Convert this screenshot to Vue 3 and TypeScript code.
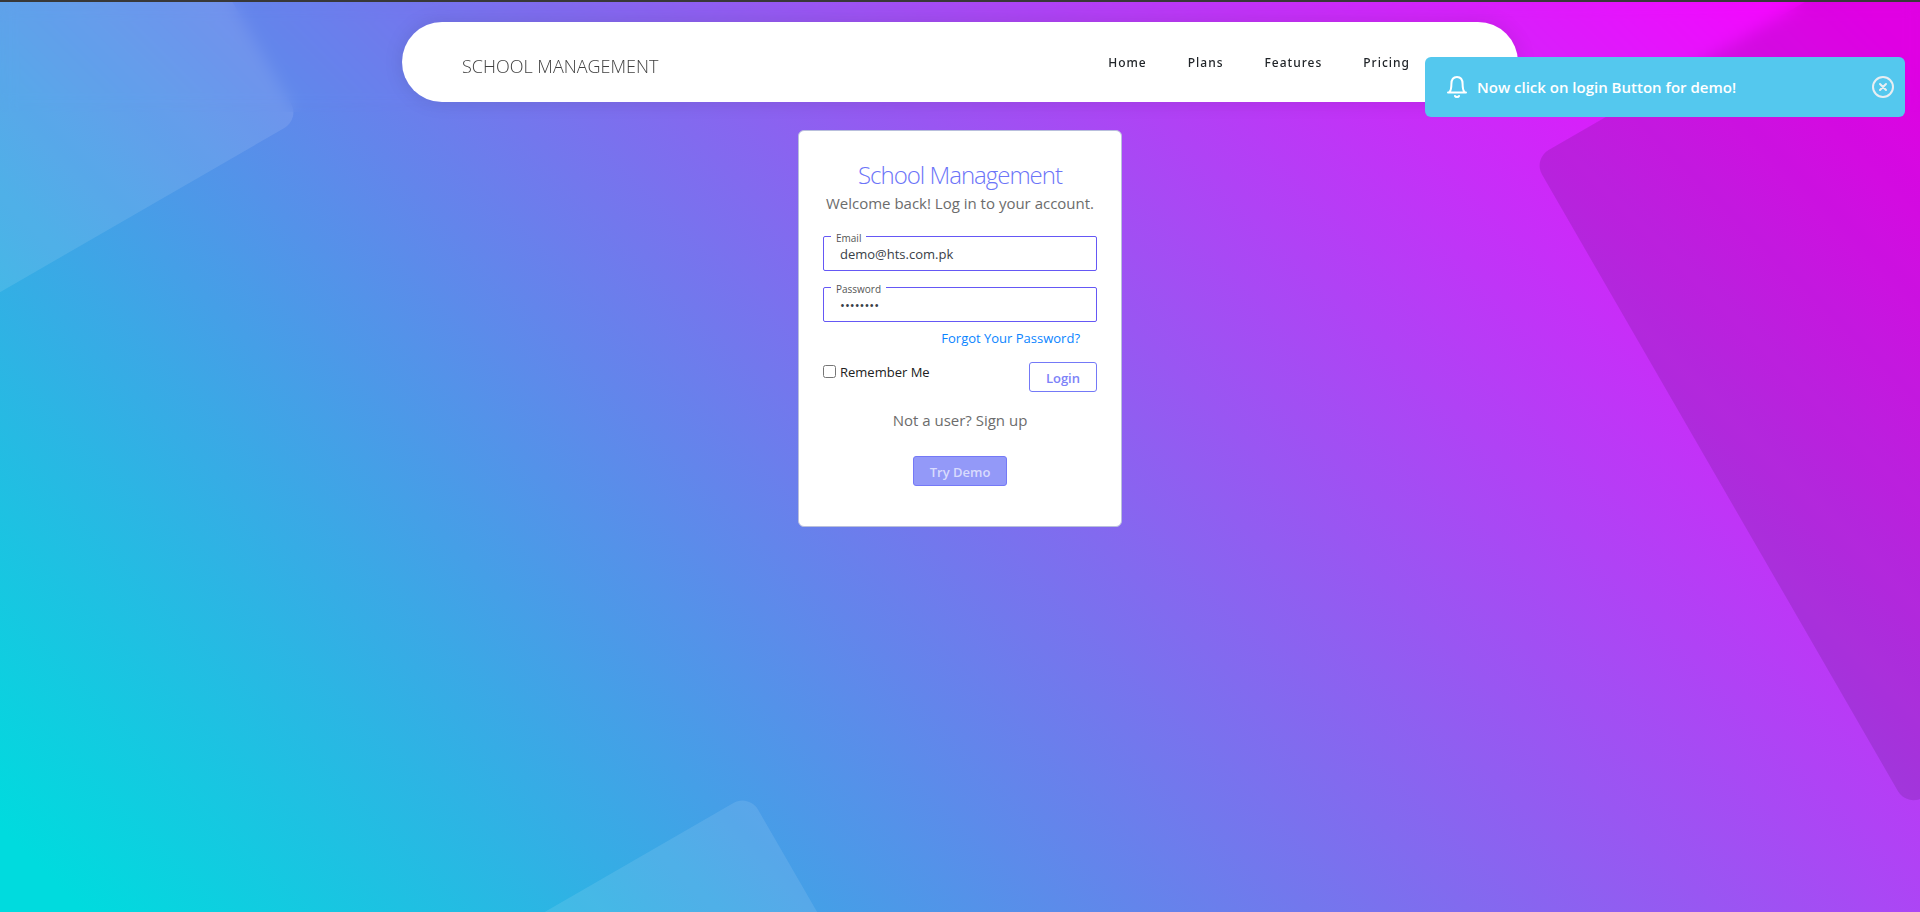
<script setup lang="ts">
import { ref } from 'vue'

interface NavLink {
  label: string
  href: string
}

const links: NavLink[] = [
  { label: 'Home', href: '#home' },
  { label: 'Plans', href: '#plans' },
  { label: 'Features', href: '#features' },
  { label: 'Pricing', href: '#pricing' },
]

const email = ref('demo@hts.com.pk')
const password = ref('demo1234')
const remember = ref(false)
const toastOpen = ref(true)
</script>

<template>
  <div class="page">
    <svg class="shapes" viewBox="0 0 1920 912" preserveAspectRatio="xMidYMid slice" aria-hidden="true">
      <rect class="light" x="-700" y="-500" width="700" height="500" rx="18" transform="translate(300 119) rotate(-30)" />
      <rect class="dark" x="0" y="0" width="748" height="748" rx="18" transform="translate(1533 159) rotate(-30)" />
      <rect class="light" x="-500" y="0" width="500" height="500" rx="18" transform="translate(749 794) rotate(-30)" />
    </svg>

    <header class="header">
      <nav class="pill">
        <a class="brand" href="#home">SCHOOL MANAGEMENT</a>
        <ul class="links">
          <li v-for="link in links" :key="link.label">
            <a :href="link.href">{{ link.label }}</a>
          </li>
        </ul>
      </nav>
    </header>

    <main class="main">
      <form class="card" @submit.prevent>
        <h1>School Management</h1>
        <p class="welcome">Welcome back! Log in to your account.</p>

        <div class="field">
          <label for="email">Email</label>
          <input id="email" v-model="email" type="email" />
        </div>
        <div class="field">
          <label for="password">Password</label>
          <input id="password" v-model="password" type="password" />
        </div>

        <a class="forgot" href="#forgot">Forgot Your Password?</a>

        <div class="row">
          <div class="remember">
            <input id="remember" v-model="remember" type="checkbox" />
            <label for="remember">Remember Me</label>
          </div>
          <button class="btn" type="submit">Login</button>
        </div>

        <a class="signup" href="#signup">Not a user? Sign up</a>
        <button class="btn demo" type="button" disabled>Try Demo</button>
      </form>
    </main>

    <div v-if="toastOpen" class="toast" role="status">
      <svg class="bell" viewBox="0 0 20 22" aria-hidden="true">
        <path d="M1 16.500h18M2.500 16c1.700-2 1.900-4.500 1.900-8C4.400 3.800 6.500 1 10 1s5.600 2.800 5.600 7c0 3.500.2 6 1.900 8" />
        <path d="M8 20c.5 1.200 3.500 1.200 4 0" />
      </svg>
      <span class="message">Now click on login Button for demo!</span>
      <button class="close" type="button" aria-label="Close" @click="toastOpen = false">
        <svg viewBox="0 0 22 22" aria-hidden="true">
          <circle cx="11" cy="11" r="10" />
          <path d="M8 8l6 6M14 8l-6 6" />
        </svg>
      </button>
    </div>
  </div>
</template>

<style>
body {
  margin: 0;
}
</style>

<style scoped>
.page {
  position: relative;
  box-sizing: border-box;
  min-height: 100vh;
  overflow: hidden;
  border-top: 2px solid #383838;
  background: linear-gradient(45deg, #00dbde 3%, #fc00ff 98%);
  font-family: "Open Sans", "Noto Sans", sans-serif;
  font-size: 13px;
  line-height: 20px;
}

.page a {
  text-decoration: none;
}

.shapes {
  position: absolute;
  top: -2px;
  left: 0;
  width: 100%;
  height: 100vh;
}

.light {
  fill: rgba(255, 255, 255, 0.1);
}

.dark {
  fill: rgba(0, 0, 0, 0.11);
}

.header {
  position: relative;
  display: flex;
  justify-content: center;
  padding: 20px 24px 10px;
  backdrop-filter: blur(8px);
}

.pill {
  display: flex;
  align-items: center;
  justify-content: space-between;
  box-sizing: border-box;
  width: 100%;
  max-width: 1116px;
  height: 80px;
  padding: 0 108px 0 60px;
  border-radius: 40px;
  background: #fff;
  box-shadow: 0 0 20px rgba(0, 0, 0, 0.1);
}

.brand {
  padding-top: 8px;
  color: #404040;
  font-size: 18px;
  font-weight: 300;
  line-height: 24px;
}

.links {
  display: flex;
  gap: 41px;
  margin: 0;
  padding: 0;
  list-style: none;
}

.links a {
  color: #212529;
  font-family: "Noto Sans", "Open Sans", sans-serif;
  font-size: 12px;
  font-weight: 500;
  letter-spacing: 1px;
}

.main {
  position: relative;
  display: flex;
  justify-content: center;
  padding: 18px 24px;
}

.card {
  display: flex;
  flex-direction: column;
  box-sizing: border-box;
  width: 324px;
  padding: 30px 24px 40px;
  border: 1px solid #b9bfdc;
  border-radius: 6px;
  background: #fff;
}

h1 {
  margin: 0;
  color: #6c74f8;
  font-size: 24px;
  font-weight: 300;
  line-height: 28px;
  letter-spacing: -1px;
  text-align: center;
}

.welcome {
  margin: 0 0 19px;
  color: #6c6c6c;
  font-size: 15px;
  line-height: 28px;
  text-align: center;
  white-space: nowrap;
}

.field {
  position: relative;
  margin-bottom: 16px;
}

.field label {
  position: absolute;
  top: -5px;
  left: 8px;
  padding: 0 5px;
  background: #fff;
  color: #555;
  font-size: 10px;
  line-height: 14px;
}

.field input {
  display: block;
  box-sizing: border-box;
  width: 100%;
  height: 35px;
  padding: 0 16px;
  border: 1px solid #6558f5;
  border-radius: 2px;
  outline: none;
  background: #fff;
  color: #394047;
  font: inherit;
}

.forgot {
  align-self: flex-end;
  margin: -10px 17px 14px 0;
  color: #0a84ff;
}

.row {
  display: flex;
  justify-content: space-between;
  margin-bottom: 18px;
}

.remember {
  display: flex;
  gap: 4px;
  color: #212121;
}

.remember input {
  width: 13px;
  height: 13px;
  margin: 3px 0;
}

.btn {
  box-sizing: border-box;
  height: 30px;
  padding: 2px 16px 0;
  border: 1px solid #7479f7;
  border-radius: 3px;
  background: #fff;
  color: #7c82f8;
  font: inherit;
  font-weight: 600;
}

.signup {
  align-self: center;
  margin-bottom: 26px;
  color: #6c6c6c;
  font-size: 15px;
}

.demo {
  align-self: center;
  background: #9399f8;
  color: #d9dbfd;
}

.toast {
  position: absolute;
  top: 55px;
  right: 15px;
  display: flex;
  align-items: center;
  box-sizing: border-box;
  width: 480px;
  max-width: calc(100% - 30px);
  min-height: 60px;
  padding: 0 11px 0 22px;
  border-radius: 6px;
  background: #54c8ee;
  color: #fff;
}

.toast svg {
  display: block;
  fill: none;
  stroke: #fff;
  stroke-width: 2;
  stroke-linecap: round;
}

.bell {
  width: 20px;
  height: 22px;
}

.message {
  flex: 1;
  margin-left: 10px;
  font-size: 15px;
  font-weight: 600;
}

.close {
  padding: 0;
  border: 0;
  background: none;
}

.close svg {
  width: 22px;
  height: 22px;
  stroke: #e8eef2;
}
</style>
